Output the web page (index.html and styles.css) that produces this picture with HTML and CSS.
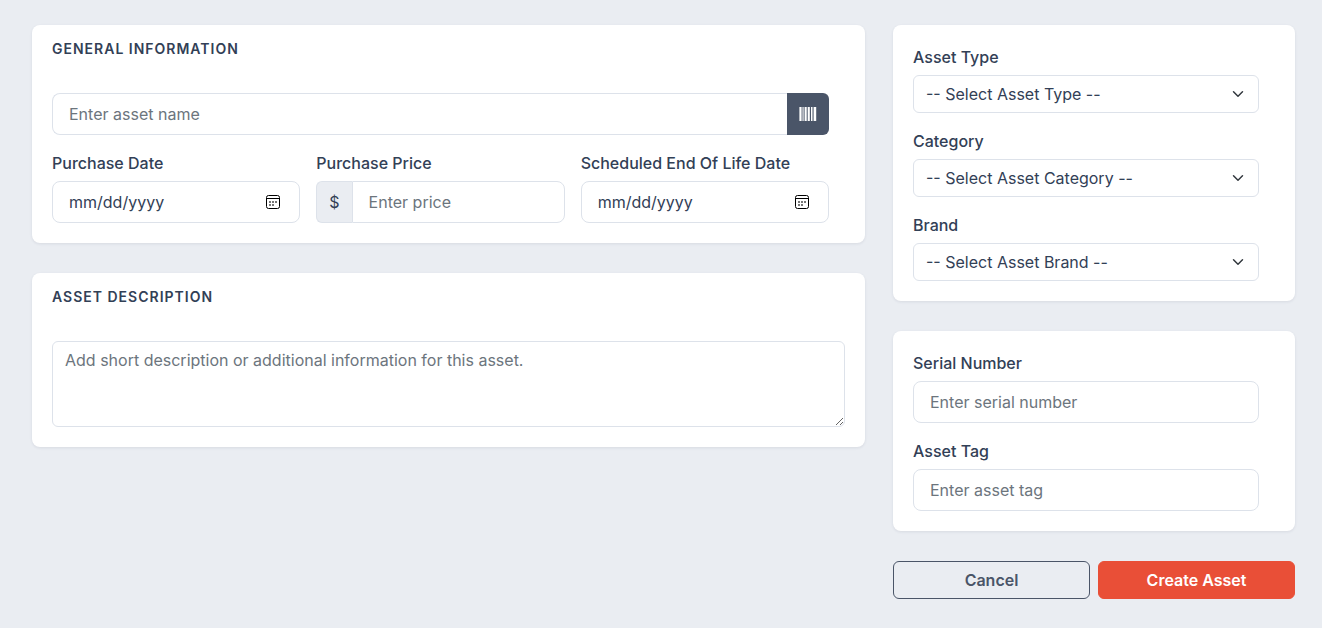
FILE: index.html
```html
<!DOCTYPE html>
<html lang="en-US">
<head>
<meta charset="utf-8">
<meta name="viewport" content="width=device-width, initial-scale=1">
<title>Create Asset</title>
<link rel="stylesheet" href="styles.css">
</head>
<body>
<form class="asset-form">
  <div class="column">
    <section class="card">
      <h2 class="card-title">General Information</h2>
      <div class="fields narrow">
        <div class="input-group">
          <input class="control" type="text" placeholder="Enter asset name" aria-label="Asset name">
          <button class="scan" type="button" aria-label="Scan barcode">
            <svg width="18" height="14" viewBox="0 0 18 14" fill="currentColor" aria-hidden="true"><path d="M.4 0h2.200v14H.4zM3.500 0h1.100v14H3.500zM5.600 0h2.100v14H5.600zM8.700 0h2.100v14H8.700zM12 0h1.100v14H12zM13.600 0h.8v14h-.8zM15 0h2.200v14H15z"/></svg>
          </button>
        </div>
        <div class="row">
          <div class="field">
            <label for="purchase-date">Purchase Date</label>
            <input class="control" id="purchase-date" type="date">
          </div>
          <div class="field">
            <label for="price">Purchase Price</label>
            <div class="input-group">
              <span class="prefix">$</span>
              <input class="control" id="price" type="text" placeholder="Enter price">
            </div>
          </div>
          <div class="field">
            <label for="eol-date">Scheduled End Of Life Date</label>
            <input class="control" id="eol-date" type="date">
          </div>
        </div>
      </div>
    </section>
    <section class="card">
      <h2 class="card-title">Asset Description</h2>
      <textarea class="description" rows="3" placeholder="Add short description or additional information for this asset." aria-label="Asset description"></textarea>
    </section>
  </div>
  <div class="column">
    <section class="card side">
      <div class="fields narrow">
        <div class="field">
          <label for="type">Asset Type</label>
          <select class="select" id="type"><option>-- Select Asset Type --</option></select>
        </div>
        <div class="field">
          <label for="category">Category</label>
          <select class="select" id="category"><option>-- Select Asset Category --</option></select>
        </div>
        <div class="field">
          <label for="brand">Brand</label>
          <select class="select" id="brand"><option>-- Select Asset Brand --</option></select>
        </div>
      </div>
    </section>
    <section class="card side">
      <div class="fields narrow">
        <div class="field">
          <label for="serial">Serial Number</label>
          <input class="control" id="serial" type="text" placeholder="Enter serial number">
        </div>
        <div class="field">
          <label for="tag">Asset Tag</label>
          <input class="control" id="tag" type="text" placeholder="Enter asset tag">
        </div>
      </div>
    </section>
    <div class="actions">
      <button class="button outline" type="button">Cancel</button>
      <button class="button primary" type="submit">Create Asset</button>
    </div>
  </div>
</form>
</body>
</html>
```
FILE: styles.css
```css
* {
  box-sizing: border-box;
}

body {
  margin: 0;
  background: #eaedf2;
  color: #324056;
  font: 400 16px/24px Inter, "Liberation Sans", sans-serif;
}

input,
select,
textarea,
button {
  margin: 0;
  font: inherit;
  color: inherit;
}

.asset-form {
  display: grid;
  grid-template-columns: minmax(0, 833fr) minmax(0, 402fr);
  gap: 28px;
  padding: 25px 27px 29px 32px;
}

.column {
  display: flex;
  flex-direction: column;
  gap: 30px;
}

.card {
  padding: 12px 20px 20px;
  background: #fff;
  border-radius: 8px;
  box-shadow: 0 1px 3px rgba(46, 62, 84, 0.1);
}

.side {
  padding-top: 20px;
}

.card-title {
  margin: 0 0 32px;
  font-size: 14px;
  font-weight: 600;
  line-height: 24px;
  letter-spacing: 1px;
  text-transform: uppercase;
}

.fields {
  display: flex;
  flex-direction: column;
  gap: 16px;
}

.narrow {
  padding-right: 16px;
}

.row {
  display: grid;
  grid-template-columns: repeat(3, minmax(0, 1fr));
  gap: 16px;
}

.field {
  display: flex;
  flex-direction: column;
  gap: 6px;
}

label {
  font-weight: 500;
}

.control,
.select,
.description {
  display: block;
  width: 100%;
  min-width: 0;
  background-color: #fff;
  border: 1px solid #dde2ea;
  outline: none;
}

.control {
  height: 42px;
  padding: 8px 16px;
  border-radius: 8px;
}

.control::placeholder,
.description::placeholder {
  color: #6c757d;
  opacity: 1;
}

.control::-webkit-datetime-edit-fields-wrapper,
.control::-webkit-datetime-edit-month-field,
.control::-webkit-datetime-edit-day-field,
.control::-webkit-datetime-edit-year-field {
  padding: 0;
}

.control::-webkit-calendar-picker-indicator {
  width: 20px;
  height: 20px;
  margin: 0;
  padding: 0;
  background: url("data:image/svg+xml,%3Csvg xmlns='http://www.w3.org/2000/svg' viewBox='0 0 14 14'%3E%3Crect x='.5' y='.5' width='13' height='13' rx='2' fill='none' stroke='%23000'/%3E%3Cpath d='M1 3.500h12' stroke='%23000'/%3E%3Cpath d='M3 6h2v2H3zM6 6h2v2H6zM9 6h2v2H9zM3 9h2v2H3zM6 9h2v2H6z' fill='%23777'/%3E%3C/svg%3E") center / 14px 14px no-repeat;
}

.input-group {
  display: flex;
}

.input-group .control:first-child {
  border-right: 0;
  border-radius: 8px 0 0 8px;
}

.input-group .control:last-child {
  border-radius: 0 8px 8px 0;
}

.scan {
  display: flex;
  flex: none;
  align-items: center;
  justify-content: center;
  width: 42px;
  padding: 0;
  color: #fff;
  background: #4a5568;
  border: 0;
  border-radius: 0 6px 6px 0;
}

.prefix {
  display: flex;
  align-items: center;
  padding: 0 12px;
  background: #eaedf2;
  border: 1px solid #dde2ea;
  border-right: 0;
  border-radius: 6px 0 0 6px;
}

.select {
  height: 38px;
  padding: 6px 36px 6px 12px;
  appearance: none;
  border-radius: 6px;
  background-image: url("data:image/svg+xml,%3Csvg xmlns='http://www.w3.org/2000/svg' viewBox='0 0 16 16'%3E%3Cpath fill='none' stroke='%23343a40' stroke-linecap='round' stroke-linejoin='round' stroke-width='2' d='m2 5 6 6 6-6'/%3E%3C/svg%3E");
  background-position: right 12px center;
  background-size: 16px 12px;
  background-repeat: no-repeat;
}

.description {
  min-height: 86px;
  padding: 6px 12px;
  border-radius: 6px;
  resize: vertical;
}

.actions {
  display: grid;
  grid-template-columns: 1fr 1fr;
  gap: 8px;
}

.button {
  padding: 6px 12px;
  border: 1px solid;
  border-radius: 6px;
  font-weight: 600;
}

.outline {
  color: #4a5568;
  background: transparent;
  border-color: #4a5568;
}

.primary {
  color: #fff;
  background: #e94f37;
  border-color: #e94f37;
}
```
